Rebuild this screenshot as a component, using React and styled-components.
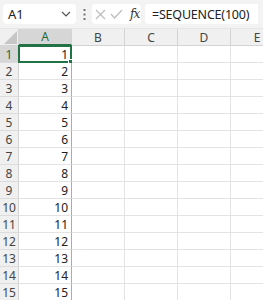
import React from 'react';
import styled, { createGlobalStyle } from 'styled-components';

const GlobalStyle = createGlobalStyle`
  html, body {
    margin: 0;
    padding: 0;
    background: #ffffff;
  }
  body {
    font-family: "Noto Sans", "Liberation Sans", Arial, sans-serif;
    width: 263px;
    height: 300px;
    overflow: hidden;
  }
`;

const Window = styled.div`
  width: 263px;
  height: 300px;
  overflow: hidden;
  display: flex;
  flex-direction: column;
`;

const FormulaBar = styled.div`
  height: 29px;
  flex: none;
  background: #f3f3f3;
  display: flex;
  align-items: flex-start;
  padding: 4px 0 0 3px;
  box-sizing: border-box;
  border-bottom: 1px solid #e6e6e6;
`;

const NameBox = styled.div`
  width: 73px;
  height: 20px;
  background: #fff;
  border-radius: 4px;
  display: flex;
  align-items: center;
  justify-content: space-between;
  padding: 0 5px 0 5px;
  box-sizing: border-box;
  font-size: 13px;
  color: #222;
`;

const Grip = styled.div`
  width: 16px;
  height: 20px;
  display: flex;
  align-items: center;
  justify-content: center;
`;

const ButtonBox = styled.div`
  width: 49px;
  height: 20px;
  background: #fff;
  border-radius: 4px;
  display: flex;
  align-items: center;
  gap: 4px;
  padding-left: 3px;
  box-sizing: border-box;
`;

const Fx = styled.span`
  font-family: "DejaVu Serif", "Liberation Serif", serif;
  font-style: italic;
  font-size: 12px;
  color: #333;
  margin-left: 3px;
  letter-spacing: -1px;
`;

const FormulaInput = styled.div`
  width: 113px;
  height: 20px;
  margin-left: 4px;
  background: #fff;
  border-radius: 4px 0 0 4px;
  display: flex;
  align-items: center;
  padding-left: 7px;
  box-sizing: border-box;
  font-size: 12.5px;
  letter-spacing: -0.2px;
  color: #222;
  white-space: nowrap;
  overflow: hidden;
`;

const Sheet = styled.div`
  display: grid;
  grid-template-columns: 19px repeat(5, 53px);
  grid-auto-rows: 17px;
  width: 284px;
  font-size: 12px;
`;

const Corner = styled.div`
  background: #f0f0f0;
  border-right: 1px solid #d4d4d4;
  border-bottom: 1px solid #d4d4d4;
  display: flex;
  align-items: flex-end;
  justify-content: flex-end;
  padding: 0 1px 1px 0;
  box-sizing: border-box;
`;

const ColHead = styled.div`
  background: ${p => (p.$active ? '#d6d6d6' : '#f0f0f0')};
  color: ${p => (p.$active ? '#1e6b41' : '#444')};
  border-right: 1px solid #d4d4d4;
  border-bottom: ${p => (p.$active ? '2px solid #217346' : '1px solid #d4d4d4')};
  display: flex;
  align-items: center;
  justify-content: center;
  box-sizing: border-box;
  font-size: 12px;
`;

const RowHead = styled.div`
  background: ${p => (p.$active ? '#d6d6d6' : '#f0f0f0')};
  color: ${p => (p.$active ? '#1e6b41' : '#444')};
  border-right: 1px solid #d4d4d4;
  border-bottom: 1px solid #dcdcdc;
  display: flex;
  align-items: center;
  justify-content: center;
  box-sizing: border-box;
  font-size: 12px;
`;

const Cell = styled.div`
  position: relative;
  background: #fff;
  color: #222;
  border-right: 1px solid ${p => (p.$spill ? '#8fb0e0' : '#e3e3e3')};
  border-bottom: 1px solid #e3e3e3;
  display: flex;
  align-items: center;
  justify-content: flex-end;
  padding-right: 3px;
  box-sizing: border-box;
`;

const Selection = styled.div`
  position: absolute;
  left: -1px;
  top: -1px;
  right: -1px;
  bottom: -1px;
  border: 2px solid #217346;
  pointer-events: none;
`;

const FillHandle = styled.div`
  position: absolute;
  right: -3px;
  bottom: -3px;
  width: 5px;
  height: 5px;
  background: #217346;
  border: 1px solid #fff;
  box-sizing: border-box;
`;

const columns = ['A', 'B', 'C', 'D', 'E'];
const rows = Array.from({ length: 15 }, (_, i) => i + 1);

const Chevron = () => (
  <svg width="10" height="6" viewBox="0 0 10 6">
    <path d="M1 1 L5 5 L9 1" fill="none" stroke="#555" strokeWidth="1.2" />
  </svg>
);

const Dots = () => (
  <svg width="3" height="11" viewBox="0 0 3 11">
    <rect x="0.5" y="0" width="2" height="2" fill="#777" />
    <rect x="0.5" y="4.5" width="2" height="2" fill="#777" />
    <rect x="0.5" y="9" width="2" height="2" fill="#777" />
  </svg>
);

const Cross = () => (
  <svg width="11" height="11" viewBox="0 0 11 11">
    <path d="M1 1 L10 10 M10 1 L1 10" stroke="#bdbdbd" strokeWidth="1.2" fill="none" />
  </svg>
);

const Check = () => (
  <svg width="13" height="10" viewBox="0 0 13 10">
    <path d="M1 5 L4.5 9 L12 1" stroke="#bdbdbd" strokeWidth="1.2" fill="none" />
  </svg>
);

const CornerTriangle = () => (
  <svg width="13" height="13" viewBox="0 0 13 13">
    <polygon points="13,0 13,13 0,13" fill="#c6c6c6" />
  </svg>
);

export default function App() {
  return (
    <Window>
      <GlobalStyle />
      <FormulaBar>
        <NameBox>
          <span>A1</span>
          <Chevron />
        </NameBox>
        <Grip>
          <Dots />
        </Grip>
        <ButtonBox>
          <Cross />
          <Check />
          <Fx>fx</Fx>
        </ButtonBox>
        <FormulaInput>=SEQUENCE(100)</FormulaInput>
      </FormulaBar>
      <Sheet>
        <Corner>
          <CornerTriangle />
        </Corner>
        {columns.map(c => (
          <ColHead key={c} $active={c === 'A'}>{c}</ColHead>
        ))}
        {rows.map(r => (
          <React.Fragment key={r}>
            <RowHead $active={r === 1}>{r}</RowHead>
            {columns.map(c => (
              <Cell key={c} $spill={c === 'A'}>
                {c === 'A' ? r : ''}
                {c === 'A' && r === 1 && (
                  <Selection>
                    <FillHandle />
                  </Selection>
                )}
              </Cell>
            ))}
          </React.Fragment>
        ))}
      </Sheet>
    </Window>
  );
}
